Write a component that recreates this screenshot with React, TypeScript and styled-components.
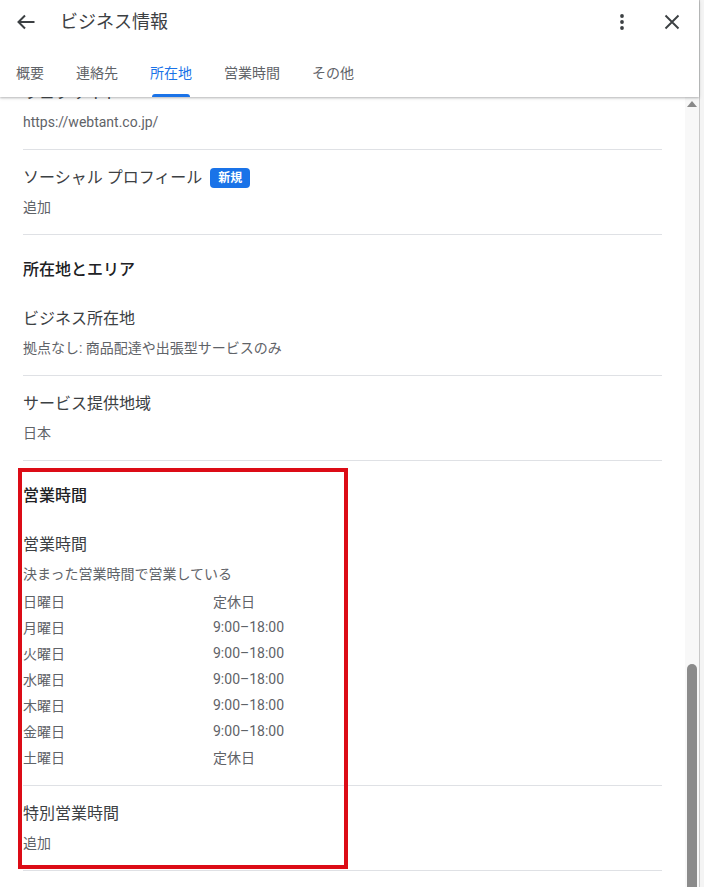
import React from 'react'
import styled, { createGlobalStyle } from 'styled-components'

const GlobalStyle = createGlobalStyle`
  html, body {
    margin: 0;
    padding: 0;
    background: #f4f4f4;
  }
  body {
    font-family: Roboto, "Noto Sans CJK JP", "Noto Sans", sans-serif;
    color: #3c4043;
    overflow: hidden;
  }
  * { box-sizing: border-box; }
`

const Dialog = styled.div`
  width: 700px;
  height: 100vh;
  display: flex;
  flex-direction: column;
  background: #fff;
  border-right: 1px solid #c9c9c9;
`

const Header = styled.header`
  flex: none;
  position: relative;
  z-index: 2;
  background: #fff;
  box-shadow: 0 1px 2px rgba(60, 64, 67, 0.3), 0 1px 4px rgba(60, 64, 67, 0.12);
`

const TopRow = styled.div`
  height: 44px;
  display: flex;
  align-items: center;
  padding: 0 15px 0 14px;
  gap: 26px;
`

const IconButton = styled.button`
  width: 24px;
  height: 24px;
  padding: 0;
  border: 0;
  background: none;
  color: #3c4043;
  display: flex;
  align-items: center;
  justify-content: center;
  cursor: pointer;
`

const Title = styled.h1`
  flex: 1;
  margin: 0 0 0 -4px;
  font-size: 18px;
  font-weight: 400;
  line-height: 24px;
  color: #3c4043;
`

const TabBar = styled.nav`
  height: 49px;
  margin-top: 4px;
  display: flex;
`

const Tab = styled.div<{ $active?: boolean }>`
  position: relative;
  height: 49px;
  padding: 0 16px 2px;
  display: flex;
  align-items: center;
  font-size: 14px;
  color: ${({ $active }) => ($active ? '#1a73e8' : '#5f6368')};
  &::after {
    content: '';
    display: ${({ $active }) => ($active ? 'block' : 'none')};
    position: absolute;
    left: 18px;
    right: 18px;
    bottom: 0;
    height: 3px;
    border-radius: 3px 3px 0 0;
    background: #1a73e8;
  }
`

const ScrollArea = styled.div`
  flex: 1;
  min-height: 0;
  display: flex;
`

const Viewport = styled.div`
  flex: 1;
  overflow: hidden;
`

const List = styled.div<{ $offset: number }>`
  margin-top: ${({ $offset }) => -$offset}px;
  padding: 0 23px 0 23px;
`

const Section = styled.section`
  position: relative;
`

const SectionHeading = styled.h2`
  margin: 0;
  padding: 23px 0 9px;
  font-size: 16px;
  line-height: 24px;
  font-weight: 500;
  color: #202124;
`

const Item = styled.div<{ $tight?: boolean }>`
  padding: 16px 0 ${({ $tight }) => ($tight ? 15 : 17)}px;
  border-bottom: 1px solid #dfe1e5;
`

const ItemTitle = styled.div`
  display: flex;
  align-items: center;
  font-size: 16px;
  line-height: 24px;
  color: #3c4043;
`

const ItemValue = styled.div`
  margin-top: 7px;
  font-size: 14px;
  line-height: 20px;
  color: #5f6368;
`

const Badge = styled.span`
  margin-left: 8px;
  height: 20px;
  padding: 0 8px;
  border-radius: 4px;
  background: #1a73e8;
  color: #fff;
  font-size: 12px;
  font-weight: 700;
  line-height: 20px;
`

const HoursGrid = styled.div`
  margin-top: 4px;
  display: grid;
  grid-template-columns: 190px 1fr;
  grid-auto-rows: 26px;
  align-items: center;
  font-size: 14px;
  color: #5f6368;
`

const Highlight = styled.div`
  position: absolute;
  top: 7px;
  left: -5px;
  width: 330px;
  bottom: 2px;
  border: 4px solid #dc0c16;
  pointer-events: none;
`

const ScrollBar = styled.div`
  flex: none;
  width: 14px;
  display: flex;
  flex-direction: column;
  background: #f8f8f8;
`

const ScrollUp = styled.div`
  flex: none;
  height: 14px;
  display: flex;
  justify-content: center;
  padding-top: 4px;
  &::before {
    content: '';
    width: 0;
    height: 0;
    border-left: 5px solid transparent;
    border-right: 5px solid transparent;
    border-bottom: 6px solid #8a8a8a;
  }
`

const ScrollThumb = styled.div<{ $top: number }>`
  flex: 1;
  margin: ${({ $top }) => $top}px 2px 0;
  border-radius: 5px 5px 0 0;
  background: #8b8b8b;
`

const BackIcon = () => (
  <svg width="24" height="24" viewBox="0 0 24 24" fill="none" stroke="currentColor" strokeWidth="2">
    <path d="M20.5 12H5" />
    <path d="M11 5.5 4.5 12l6.5 6.5" />
  </svg>
)

const MoreIcon = () => (
  <svg width="24" height="24" viewBox="0 0 24 24" fill="currentColor">
    <circle cx="12" cy="6" r="1.9" />
    <circle cx="12" cy="12" r="1.9" />
    <circle cx="12" cy="18" r="1.9" />
  </svg>
)

const CloseIcon = () => (
  <svg width="24" height="24" viewBox="0 0 24 24" fill="none" stroke="currentColor" strokeWidth="1.9">
    <path d="M5.5 5.5l13 13M18.5 5.5l-13 13" />
  </svg>
)

const tabs = ['概要', '連絡先', '所在地', '営業時間', 'その他']

const hours: [string, string][] = [
  ['日曜日', '定休日'],
  ['月曜日', '9:00–18:00'],
  ['火曜日', '9:00–18:00'],
  ['水曜日', '9:00–18:00'],
  ['木曜日', '9:00–18:00'],
  ['金曜日', '9:00–18:00'],
  ['土曜日', '定休日'],
]

export default function App() {
  return (
    <>
      <GlobalStyle />
      <Dialog>
        <Header>
          <TopRow>
            <IconButton aria-label="戻る"><BackIcon /></IconButton>
            <Title>ビジネス情報</Title>
            <IconButton aria-label="その他のオプション"><MoreIcon /></IconButton>
            <IconButton aria-label="閉じる"><CloseIcon /></IconButton>
          </TopRow>
          <TabBar>
            {tabs.map((t) => (
              <Tab key={t} $active={t === '所在地'}>{t}</Tab>
            ))}
          </TabBar>
        </Header>

        <ScrollArea>
          <Viewport>
            <List $offset={32}>
              <Section>
                <Item>
                  <ItemTitle>ウェブサイト</ItemTitle>
                  <ItemValue>https://webtant.co.jp/</ItemValue>
                </Item>
                <Item>
                  <ItemTitle>
                    ソーシャル プロフィール<Badge>新規</Badge>
                  </ItemTitle>
                  <ItemValue>追加</ItemValue>
                </Item>
              </Section>

              <Section>
                <SectionHeading>所在地とエリア</SectionHeading>
                <Item>
                  <ItemTitle>ビジネス所在地</ItemTitle>
                  <ItemValue>拠点なし: 商品配達や出張型サービスのみ</ItemValue>
                </Item>
                <Item>
                  <ItemTitle>サービス提供地域</ItemTitle>
                  <ItemValue>日本</ItemValue>
                </Item>
              </Section>

              <Section>
                <SectionHeading>営業時間</SectionHeading>
                <Item $tight>
                  <ItemTitle>営業時間</ItemTitle>
                  <ItemValue>決まった営業時間で営業している</ItemValue>
                  <HoursGrid>
                    {hours.map(([day, time]) => (
                      <React.Fragment key={day}>
                        <span>{day}</span>
                        <span>{time}</span>
                      </React.Fragment>
                    ))}
                  </HoursGrid>
                </Item>
                <Item>
                  <ItemTitle>特別営業時間</ItemTitle>
                  <ItemValue>追加</ItemValue>
                </Item>
                <Highlight />
              </Section>
            </List>
          </Viewport>
          <ScrollBar>
            <ScrollUp />
            <ScrollThumb $top={553} />
          </ScrollBar>
        </ScrollArea>
      </Dialog>
    </>
  )
}
